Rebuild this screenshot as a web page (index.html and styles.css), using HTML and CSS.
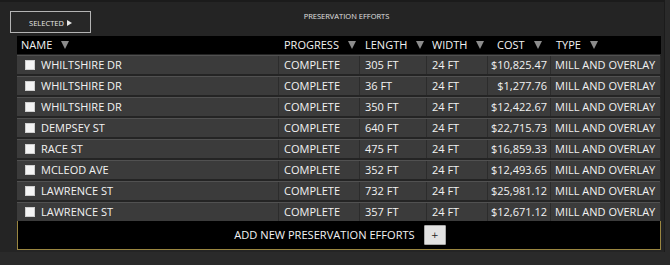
FILE: index.html
```html
<!DOCTYPE html>
<html>
<head>
<meta charset="utf-8">
<link rel="stylesheet" href="styles.css">
</head>
<body>
<div class="panel">
  <div class="topbar">
    <button class="sel-btn">SELECTED <span class="play"></span></button>
    <div class="title">PRESERVATION EFFORTS</div>
  </div>
  <div class="table">
    <div class="head">
      <div class="hc c-name">NAME<span class="sort"></span></div>
      <div class="hc c-prog">PROGRESS<span class="sort"></span></div>
      <div class="hc c-len">LENGTH<span class="sort"></span></div>
      <div class="hc c-wid">WIDTH<span class="sort"></span></div>
      <div class="hc c-cost">COST<span class="sort"></span></div>
      <div class="hc c-type">TYPE<span class="sort"></span></div>
    </div>
    <div class="rows">
      <div class="row"><div class="cell name"><span class="chk"></span>WHILTSHIRE DR</div><div class="cell">COMPLETE</div><div class="cell">305 FT</div><div class="cell">24 FT</div><div class="cell num">$10,825.47</div><div class="cell">MILL AND OVERLAY</div></div>
      <div class="row"><div class="cell name"><span class="chk"></span>WHILTSHIRE DR</div><div class="cell">COMPLETE</div><div class="cell">36 FT</div><div class="cell">24 FT</div><div class="cell num">$1,277.76</div><div class="cell">MILL AND OVERLAY</div></div>
      <div class="row"><div class="cell name"><span class="chk"></span>WHILTSHIRE DR</div><div class="cell">COMPLETE</div><div class="cell">350 FT</div><div class="cell">24 FT</div><div class="cell num">$12,422.67</div><div class="cell">MILL AND OVERLAY</div></div>
      <div class="row"><div class="cell name"><span class="chk"></span>DEMPSEY ST</div><div class="cell">COMPLETE</div><div class="cell">640 FT</div><div class="cell">24 FT</div><div class="cell num">$22,715.73</div><div class="cell">MILL AND OVERLAY</div></div>
      <div class="row"><div class="cell name"><span class="chk"></span>RACE ST</div><div class="cell">COMPLETE</div><div class="cell">475 FT</div><div class="cell">24 FT</div><div class="cell num">$16,859.33</div><div class="cell">MILL AND OVERLAY</div></div>
      <div class="row"><div class="cell name"><span class="chk"></span>MCLEOD AVE</div><div class="cell">COMPLETE</div><div class="cell">352 FT</div><div class="cell">24 FT</div><div class="cell num">$12,493.65</div><div class="cell">MILL AND OVERLAY</div></div>
      <div class="row"><div class="cell name"><span class="chk"></span>LAWRENCE ST</div><div class="cell">COMPLETE</div><div class="cell">732 FT</div><div class="cell">24 FT</div><div class="cell num">$25,981.12</div><div class="cell">MILL AND OVERLAY</div></div>
      <div class="row"><div class="cell name"><span class="chk"></span>LAWRENCE ST</div><div class="cell">COMPLETE</div><div class="cell">357 FT</div><div class="cell">24 FT</div><div class="cell num">$12,671.12</div><div class="cell">MILL AND OVERLAY</div></div>
    </div>
    <div class="addbox">
      <span class="addtext">ADD NEW PRESERVATION EFFORTS</span>
      <button class="plus">+</button>
    </div>
  </div>
</div>
</body>
</html>
```
FILE: styles.css
```css
html, body {
  margin: 0;
  padding: 0;
}
body {
  background: #2a2a2a;
  width: 670px;
  height: 265px;
  overflow: hidden;
  font-family: "Open Sans", "Noto Sans", sans-serif;
  color: #f2f2f2;
}
.panel {
  box-sizing: border-box;
  width: 665px;
  height: 252px;
  background: #242424;
  border-top: 2px solid #1b1b1b;
  border-right: 1px solid #1b1b1b;
  padding-top: 9px;
}
.topbar {
  display: flex;
  align-items: flex-start;
  padding-left: 10px;
  height: 22px;
}
.sel-btn {
  box-sizing: border-box;
  width: 81px;
  height: 22px;
  background: #272727;
  border: 1px solid #b4b4b4;
  color: #e6e6e6;
  font-family: "Open Sans", sans-serif;
  font-size: 7.5px;
  padding: 2px 0 0 0;
  display: flex;
  align-items: center;
  justify-content: center;
  gap: 3px;
}
.play {
  width: 0;
  height: 0;
  border-top: 3.5px solid transparent;
  border-bottom: 3.5px solid transparent;
  border-left: 5px solid #e6e6e6;
  margin-top: -1px;
}
.title {
  flex: 1;
  text-align: center;
  font-size: 7.5px;
  color: #e0e0e0;
  padding-right: 62px;
  line-height: 10px;
  padding-top: 0px;
}
.table {
  margin-top: 3px;
  margin-left: 17px;
  width: 644px;
}
.head, .row {
  display: grid;
  grid-template-columns: 262px 81px 67px 61px 63px 110px;
}
.head {
  background: #000;
  height: 18px;
  font-size: 11px;
  line-height: 18px;
  margin-bottom: 1px;
}
.hc {
  display: flex;
  align-items: center;
  white-space: nowrap;
  padding-left: 5px;
}
.hc.c-name { padding-left: 4px; }
.hc.c-prog { padding-left: 5px; }
.hc.c-len { padding-left: 5px; }
.hc.c-wid { padding-left: 5px; }
.hc.c-cost { padding-left: 9px; }
.hc.c-type { padding-left: 5px; }
.sort {
  display: inline-block;
  width: 0;
  height: 0;
  border-left: 4.5px solid transparent;
  border-right: 4.5px solid transparent;
  border-top: 8px solid #8c8c8c;
  margin-left: 9px;
  margin-top: -1px;
}
.rows {
  display: flex;
  flex-direction: column;
  gap: 2px;
}
.row {
  height: 19px;
  box-sizing: border-box;
  border-top: 1px solid #515151;
  background: #3b3b3b;
  font-size: 11px;
  line-height: 18px;
  width: 643px;
}
.cell {
  white-space: nowrap;
  overflow: hidden;
  padding-left: 5px;
  border-right: 1px solid #2c2c2c;
}
.cell:last-child {
  border-right: 1px solid #2a2a2a;
  padding-left: 4px;
}
.cell.name {
  display: flex;
  align-items: center;
  padding-left: 8px;
}
.cell.num {
  text-align: right;
  padding-left: 0;
  padding-right: 3px;
}
.chk {
  box-sizing: border-box;
  width: 10px;
  height: 10px;
  background: #f4f4f4;
  border: 1px solid #cfcfcf;
  margin-right: 6px;
  margin-top: -1px;
}
.addbox {
  box-sizing: border-box;
  margin-top: -1px;
  height: 30px;
  width: 644px;
  background: #000;
  border: 1px solid #9a8640;
  display: flex;
  align-items: center;
  justify-content: center;
  gap: 9px;
  padding-left: 2px;
}
.addtext {
  font-size: 11.1px;
  color: #f2f2f2;
  line-height: 14px;
}
.plus {
  box-sizing: border-box;
  width: 22px;
  height: 20px;
  background: #e2e2e2;
  border: 1px solid #a9a9a9;
  border-radius: 1px;
  color: #222;
  font-family: "DejaVu Sans", sans-serif;
  font-size: 9px;
  line-height: 1;
  padding: 0;
  display: flex;
  align-items: center;
  justify-content: center;
}
```
